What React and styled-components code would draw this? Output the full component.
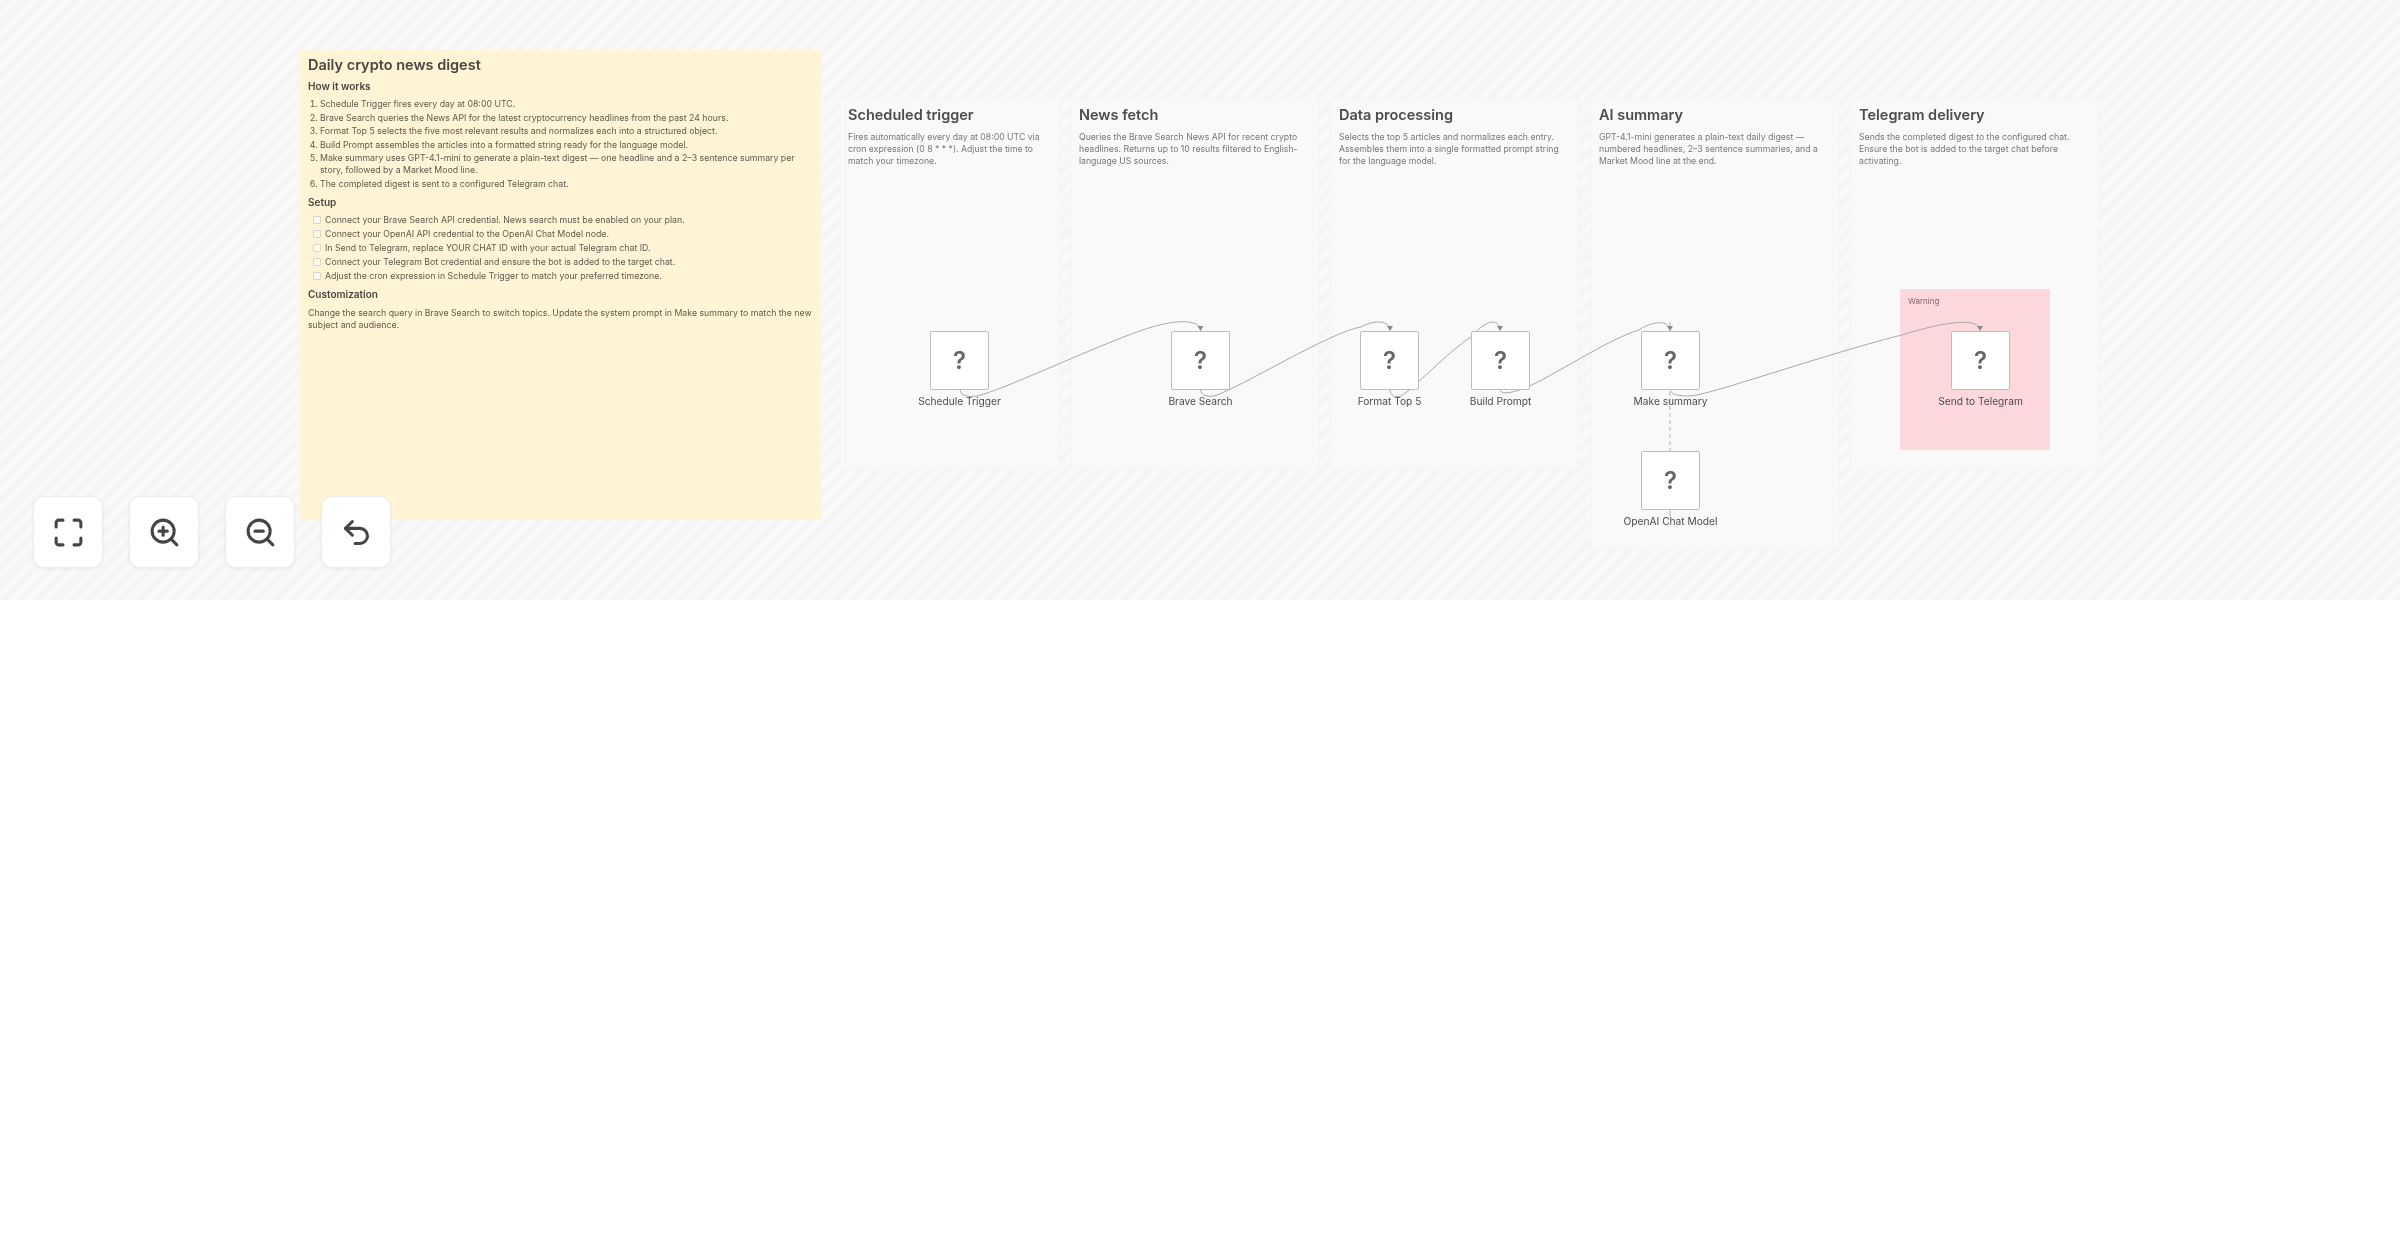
import styled, { createGlobalStyle } from "styled-components"
import { Maximize, ZoomIn, ZoomOut, Undo2 } from "lucide-react"

const GlobalStyle = createGlobalStyle`
  html, body {
    margin: 0;
    background: #fff;
    font-family: Inter, "Liberation Sans", sans-serif;
  }
`

const Canvas = styled.div`
  position: relative;
  width: 2400px;
  height: 600px;
  overflow: hidden;
  background: repeating-linear-gradient(
    -45deg,
    #f5f5f5 0,
    #f5f5f5 6px,
    #f9f9f9 6px,
    #f9f9f9 12px
  );
`

const Blurred = styled.div`
  position: absolute;
  inset: 0;
  filter: blur(0.6px);
`

const Sticky = styled.div`
  position: absolute;
  left: 300px;
  top: 50px;
  width: 521px;
  height: 470px;
  box-sizing: border-box;
  padding: 6px 8px;
  background: #fff4d6;
  color: #5f5a4c;
  font-size: 8.75px;
  line-height: 12px;
`

const StickyTitle = styled.h1`
  margin: 0 0 6px;
  font-size: 14.5px;
  line-height: 18px;
  font-weight: 600;
  color: #4a4740;
`

const StickyHeading = styled.h2`
  margin: 0 0 6px;
  font-size: 10px;
  line-height: 12px;
  font-weight: 600;
  color: #4a4740;
`

const Steps = styled.ol`
  margin: 0 0 6px;
  padding: 0 0 0 12px;

  li {
    margin-bottom: 1.6px;
    padding-right: 4px;
  }
`

const Checks = styled.ul`
  margin: 0 0 6px;
  padding: 0 0 0 5px;
  list-style: none;
`

const CheckRow = styled.li`
  display: flex;
  align-items: center;
  gap: 4px;
  height: 12px;
  margin-bottom: 2px;
  white-space: nowrap;
`

const CheckBox = styled.span`
  flex: none;
  width: 6px;
  height: 6px;
  background: #fffaf0;
  border: 0.5px solid #ddd6c6;
  border-radius: 1px;
`

const StickyText = styled.p`
  margin: 7px 0 0;
`

const Section = styled.div`
  position: absolute;
  left: ${p => p.$x}px;
  top: 100px;
  width: ${p => p.$w}px;
  height: ${p => p.$h}px;
  box-sizing: border-box;
  padding: 5px 7px;
  background: #f9f9f9;
  border: 1px solid #f6f6f6;
`

const SectionTitle = styled.h3`
  margin: 0 0 7px;
  font-size: 14.5px;
  line-height: 18px;
  font-weight: 600;
  color: #4c4c4c;
`

const SectionText = styled.p`
  margin: 0;
  padding-right: 8px;
  font-size: 8.7px;
  line-height: 12px;
  color: #777;
`

const Warning = styled.div`
  position: absolute;
  left: 1900px;
  top: 289px;
  width: 150px;
  height: 161px;
  box-sizing: border-box;
  padding: 6px 8px;
  background: #fcd8dc;
  border-radius: 1px;
  font-size: 8px;
  line-height: 12px;
  color: #7d6a6c;
`

const Edges = styled.svg`
  position: absolute;
  left: 0;
  top: 0;
  width: 2400px;
  height: 600px;
`

const Node = styled.div`
  position: absolute;
  left: ${p => p.$x}px;
  top: ${p => p.$y}px;
  width: 59px;
  display: flex;
  flex-direction: column;
  align-items: center;
`

const NodeBox = styled.div`
  box-sizing: border-box;
  width: 59px;
  height: 59px;
  display: flex;
  align-items: center;
  justify-content: center;
  background: #fff;
  border: 1px solid #bdbdbd;
  border-radius: 2px;
  font-size: 24px;
  font-weight: 600;
  color: #666;
`

const NodeLabel = styled.div`
  margin-top: 5px;
  font-size: 10.2px;
  line-height: 12px;
  white-space: nowrap;
  color: #4c4c4c;
`

const Toolbar = styled.div`
  position: absolute;
  left: 33px;
  top: 496px;
  display: flex;
  gap: 26px;
`

const ToolButton = styled.button`
  width: 70px;
  height: 72px;
  padding: 0;
  display: flex;
  align-items: center;
  justify-content: center;
  background: #fff;
  border: 1px solid #ececec;
  border-radius: 11px;
  box-shadow: 0 1px 3px rgba(0, 0, 0, 0.06);
  color: #454545;
`

const steps = [
  "Schedule Trigger fires every day at 08:00 UTC.",
  "Brave Search queries the News API for the latest cryptocurrency headlines from the past 24 hours.",
  "Format Top 5 selects the five most relevant results and normalizes each into a structured object.",
  "Build Prompt assembles the articles into a formatted string ready for the language model.",
  "Make summary uses GPT-4.1-mini to generate a plain-text digest — one headline and a 2–3 sentence summary per story, followed by a Market Mood line.",
  "The completed digest is sent to a configured Telegram chat.",
]

const setup = [
  "Connect your Brave Search API credential. News search must be enabled on your plan.",
  "Connect your OpenAI API credential to the OpenAI Chat Model node.",
  "In Send to Telegram, replace YOUR CHAT ID with your actual Telegram chat ID.",
  "Connect your Telegram Bot credential and ensure the bot is added to the target chat.",
  "Adjust the cron expression in Schedule Trigger to match your preferred timezone.",
]

const sections = [
  { x: 840, w: 220, h: 368, title: "Scheduled trigger", text: "Fires automatically every day at 08:00 UTC via cron expression (0 8 * * *). Adjust the time to match your timezone." },
  { x: 1071, w: 248, h: 368, title: "News fetch", text: "Queries the Brave Search News API for recent crypto headlines. Returns up to 10 results filtered to English-language US sources." },
  { x: 1331, w: 247, h: 368, title: "Data processing", text: "Selects the top 5 articles and normalizes each entry. Assembles them into a single formatted prompt string for the language model." },
  { x: 1591, w: 248, h: 448, title: "AI summary", text: "GPT-4.1-mini generates a plain-text daily digest — numbered headlines, 2–3 sentence summaries, and a Market Mood line at the end." },
  { x: 1851, w: 248, h: 368, title: "Telegram delivery", text: "Sends the completed digest to the configured chat. Ensure the bot is added to the target chat before activating." },
]

const nodes = [
  { x: 930, y: 331, label: "Schedule Trigger" },
  { x: 1171, y: 331, label: "Brave Search" },
  { x: 1360, y: 331, label: "Format Top 5" },
  { x: 1471, y: 331, label: "Build Prompt" },
  { x: 1641, y: 331, label: "Make summary" },
  { x: 1641, y: 451, label: "OpenAI Chat Model" },
  { x: 1951, y: 331, label: "Send to Telegram" },
]

const edges = [
  "M960 389 C960 396 968 397 977 396 C1005 390 1125 332 1160 325 C1175 321 1197 319 1200.5 329",
  "M1200.5 389 C1200.5 396 1207 397 1214 396 C1240 388 1330 332 1361 327 C1372 321 1387 319 1390 329",
  "M1390 389 C1390 396 1396 398 1401 396 C1412 390 1450 350 1471 337 C1482 324 1497 315 1500 329",
  "M1500 389 C1500 396 1515 392 1525 388 C1550 378 1610 338 1639 330 C1650 322 1667 319 1670 329",
  "M1670 389 C1670 396 1685 397 1697 395 C1730 388 1840 350 1902 335 C1930 326 1975 315 1980 329",
]

const arrows = [1200.5, 1390, 1500, 1670, 1980]

const App = () => {
  return (
    <>
      <GlobalStyle />
      <Canvas>
        <Blurred>
          {sections.map(s => (
            <Section key={s.title} $x={s.x} $w={s.w} $h={s.h}>
              <SectionTitle>{s.title}</SectionTitle>
              <SectionText>{s.text}</SectionText>
            </Section>
          ))}
          <Warning>Warning</Warning>
          <Sticky>
            <StickyTitle>Daily crypto news digest</StickyTitle>
            <StickyHeading>How it works</StickyHeading>
            <Steps>
              {steps.map(step => <li key={step}>{step}</li>)}
            </Steps>
            <StickyHeading>Setup</StickyHeading>
            <Checks>
              {setup.map(item => (
                <CheckRow key={item}>
                  <CheckBox />
                  {item}
                </CheckRow>
              ))}
            </Checks>
            <StickyHeading>Customization</StickyHeading>
            <StickyText>
              Change the search query in Brave Search to switch topics. Update the system prompt in Make summary to match the new subject and audience.
            </StickyText>
          </Sticky>
          <Edges viewBox="0 0 2400 600">
            {edges.map(d => (
              <path key={d} d={d} fill="none" stroke="#a8a8a8" strokeWidth="1" />
            ))}
            {arrows.map(x => (
              <path key={x} d={`M${x - 3} 326 L${x + 3} 326 L${x} 331 Z`} fill="#888" />
            ))}
            <path d="M1670 322 V451" fill="none" stroke="#b4b4b4" strokeWidth="1" strokeDasharray="4 3" />
            <path d="M1670 509 V516" fill="none" stroke="#b4b4b4" strokeWidth="1" />
          </Edges>
          {nodes.map(n => (
            <Node key={n.label} $x={n.x} $y={n.y}>
              <NodeBox>?</NodeBox>
              <NodeLabel>{n.label}</NodeLabel>
            </Node>
          ))}
          <Toolbar>
            <ToolButton><Maximize size={33} strokeWidth={2.2} /></ToolButton>
            <ToolButton><ZoomIn size={33} strokeWidth={2.2} /></ToolButton>
            <ToolButton><ZoomOut size={33} strokeWidth={2.2} /></ToolButton>
            <ToolButton><Undo2 size={33} strokeWidth={2.2} /></ToolButton>
          </Toolbar>
        </Blurred>
      </Canvas>
    </>
  )
}

export default App
